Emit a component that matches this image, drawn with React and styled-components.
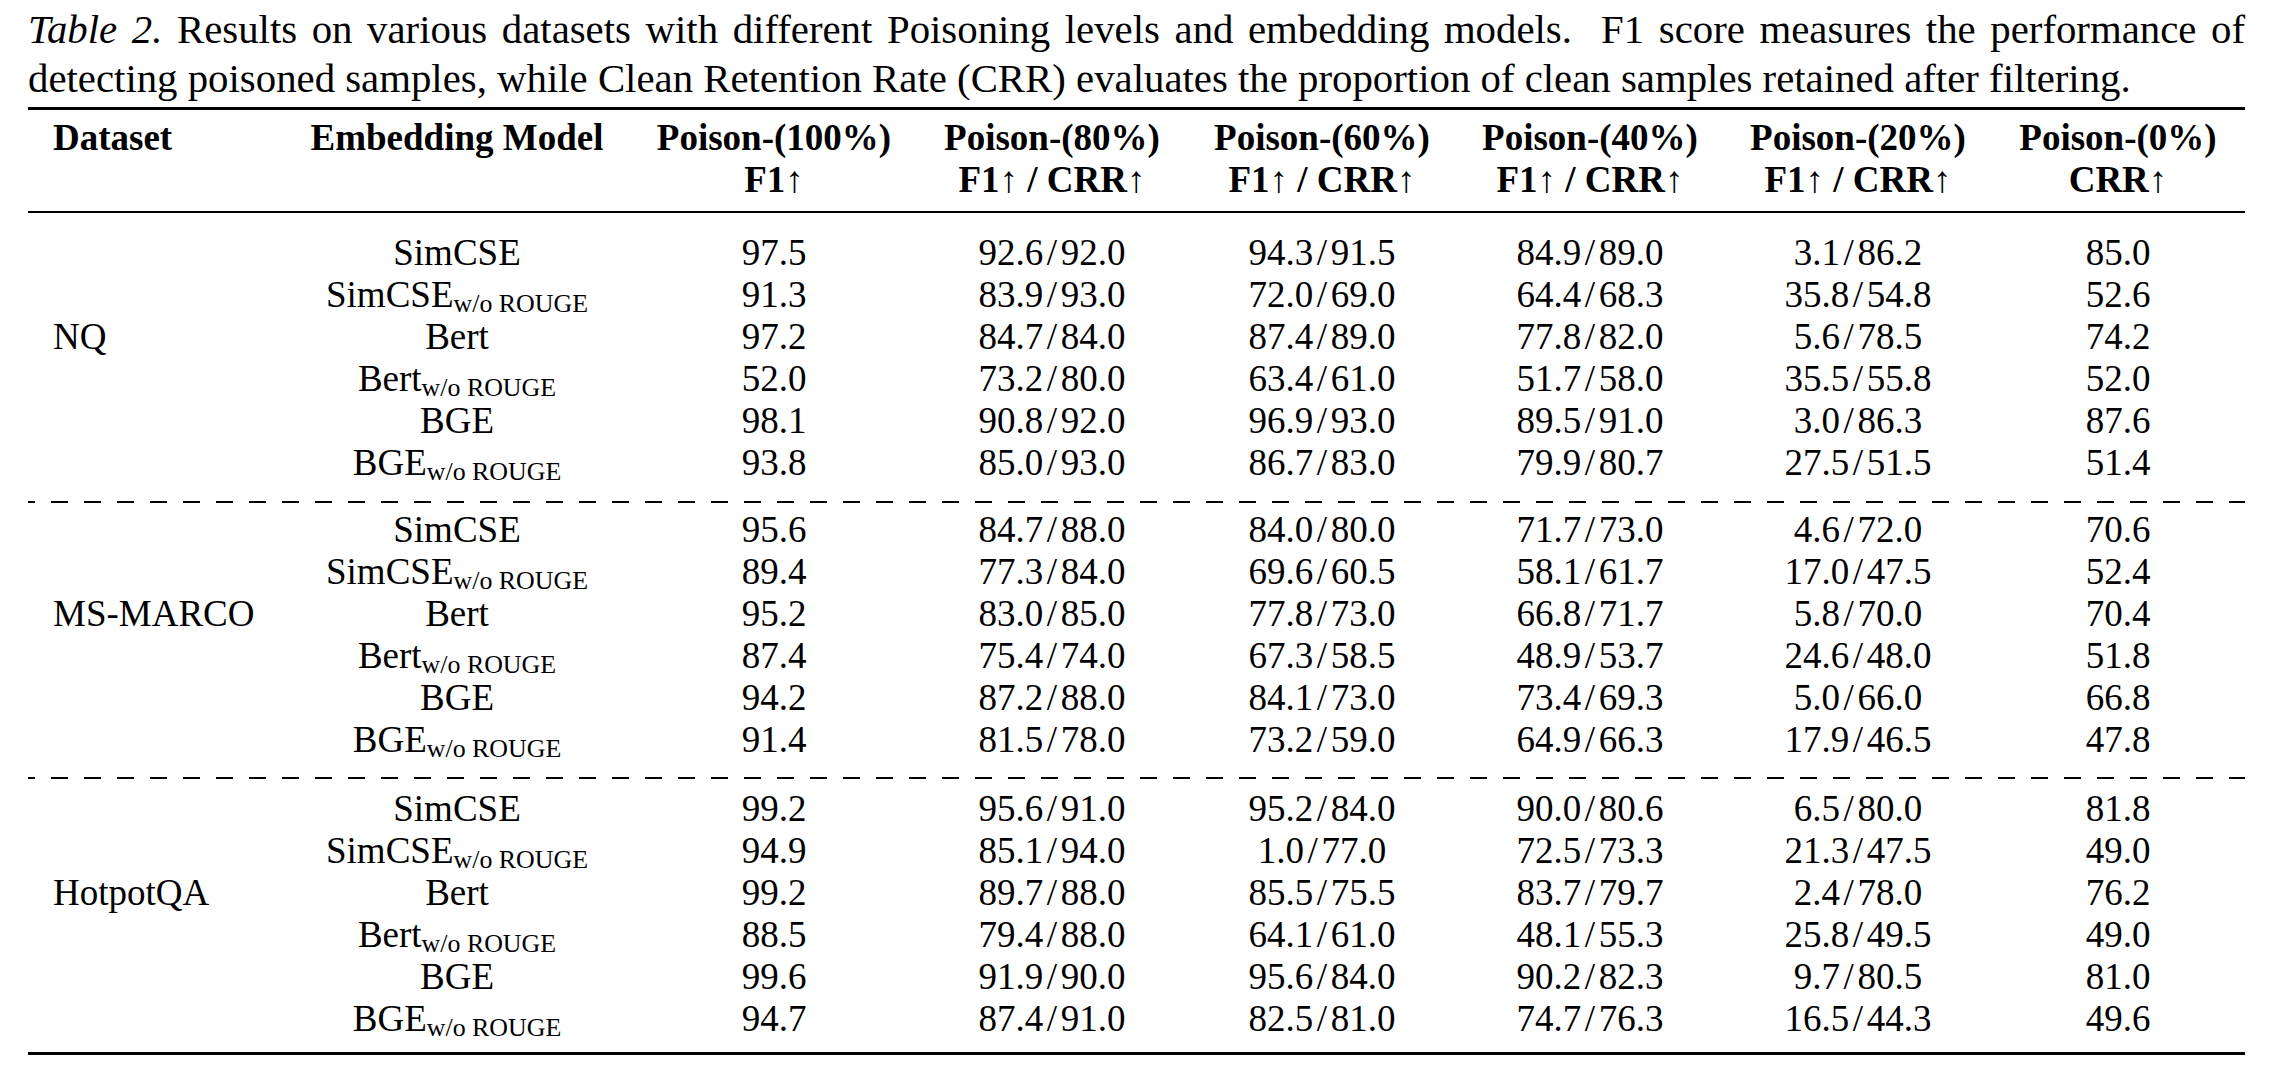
import React from 'react'
import styled, { createGlobalStyle } from 'styled-components'

const GlobalStyle = createGlobalStyle`
  html, body {
    margin: 0;
    padding: 0;
    background: #fff;
  }
  body {
    font-family: "Liberation Serif", "Times New Roman", serif;
    color: #000;
  }
`;

const COLS = '253px 352px 282px 274px 266px 270px 266px 254px';

const groups = [
  {
    name: 'NQ',
    rows: [
      ['SimCSE', false, '97.5', '92.6/92.0', '94.3/91.5', '84.9/89.0', '3.1/86.2', '85.0'],
      ['SimCSE', true, '91.3', '83.9/93.0', '72.0/69.0', '64.4/68.3', '35.8/54.8', '52.6'],
      ['Bert', false, '97.2', '84.7/84.0', '87.4/89.0', '77.8/82.0', '5.6/78.5', '74.2'],
      ['Bert', true, '52.0', '73.2/80.0', '63.4/61.0', '51.7/58.0', '35.5/55.8', '52.0'],
      ['BGE', false, '98.1', '90.8/92.0', '96.9/93.0', '89.5/91.0', '3.0/86.3', '87.6'],
      ['BGE', true, '93.8', '85.0/93.0', '86.7/83.0', '79.9/80.7', '27.5/51.5', '51.4'],
    ],
  },
  {
    name: 'MS-MARCO',
    rows: [
      ['SimCSE', false, '95.6', '84.7/88.0', '84.0/80.0', '71.7/73.0', '4.6/72.0', '70.6'],
      ['SimCSE', true, '89.4', '77.3/84.0', '69.6/60.5', '58.1/61.7', '17.0/47.5', '52.4'],
      ['Bert', false, '95.2', '83.0/85.0', '77.8/73.0', '66.8/71.7', '5.8/70.0', '70.4'],
      ['Bert', true, '87.4', '75.4/74.0', '67.3/58.5', '48.9/53.7', '24.6/48.0', '51.8'],
      ['BGE', false, '94.2', '87.2/88.0', '84.1/73.0', '73.4/69.3', '5.0/66.0', '66.8'],
      ['BGE', true, '91.4', '81.5/78.0', '73.2/59.0', '64.9/66.3', '17.9/46.5', '47.8'],
    ],
  },
  {
    name: 'HotpotQA',
    rows: [
      ['SimCSE', false, '99.2', '95.6/91.0', '95.2/84.0', '90.0/80.6', '6.5/80.0', '81.8'],
      ['SimCSE', true, '94.9', '85.1/94.0', '1.0/77.0', '72.5/73.3', '21.3/47.5', '49.0'],
      ['Bert', false, '99.2', '89.7/88.0', '85.5/75.5', '83.7/79.7', '2.4/78.0', '76.2'],
      ['Bert', true, '88.5', '79.4/88.0', '64.1/61.0', '48.1/55.3', '25.8/49.5', '49.0'],
      ['BGE', false, '99.6', '91.9/90.0', '95.6/84.0', '90.2/82.3', '9.7/80.5', '81.0'],
      ['BGE', true, '94.7', '87.4/91.0', '82.5/81.0', '74.7/76.3', '16.5/44.3', '49.6'],
    ],
  },
];

// padding above / below each block of six rows
const groupPad = [
  ['19px', '17px'],
  ['6px', '16px'],
  ['9px', '12px'],
];

const levels = ['100', '80', '60', '40', '20', '0'];

const App = () => {
  return (
    <>
      <GlobalStyle />
      <Page>
        <Caption>
          <CaptionLine justify>
            <em>Table 2.</em> Results on various datasets with different Poisoning levels and embedding models.&nbsp; F1 score measures the performance of
          </CaptionLine>
          <CaptionLine>
            detecting poisoned samples, while Clean Retention Rate (CRR) evaluates the proportion of clean samples retained after filtering.
          </CaptionLine>
        </Caption>

        <Rule thick />
        <Header>
          <HeadRow>
            <HeadCell left>Dataset</HeadCell>
            <HeadCell>Embedding Model</HeadCell>
            {levels.map(l => (
              <HeadCell key={l}>Poison-({l}%)</HeadCell>
            ))}
          </HeadRow>
          <HeadRow>
            <HeadCell left />
            <HeadCell />
            {levels.map((l, i) => (
              <HeadCell key={l}>
                {i < 5 && <>F1<Arrow>↑</Arrow></>}
                {i > 0 && i < 5 && ' / '}
                {i > 0 && <>CRR<Arrow>↑</Arrow></>}
              </HeadCell>
            ))}
          </HeadRow>
        </Header>
        <Rule />

        {groups.map((g, gi) => (
          <React.Fragment key={g.name}>
            <Group top={groupPad[gi][0]} bottom={groupPad[gi][1]}>
              {g.rows.map((r, ri) => (
                <Row key={ri}>
                  <Cell left>{ri === 2 ? g.name : ''}</Cell>
                  <Cell>
                    {r[0]}
                    {r[1] && <Sub>w/o ROUGE</Sub>}
                  </Cell>
                  {r.slice(2).map((v, vi) => {
                    const parts = v.split('/');
                    return (
                      <Cell key={vi}>
                        {parts[0]}
                        {parts.length > 1 && <Slash>/</Slash>}
                        {parts[1]}
                      </Cell>
                    );
                  })}
                </Row>
              ))}
            </Group>
            {gi < groups.length - 1 ? <Dashed /> : <Rule thick />}
          </React.Fragment>
        ))}
      </Page>
    </>
  )
}

const Page = styled.div`
  width: 2217px;
  padding: 5px 0 0 28px;
`;

const Caption = styled.div`
  font-size: 40.8px;
  line-height: 49px;
  margin-bottom: 4px;

  em {
    font-style: italic;
  }
`;

const CaptionLine = styled.div`
  text-align: ${props => (props.justify ? 'justify' : 'left')};
  text-align-last: ${props => (props.justify ? 'justify' : 'left')};
  white-space: ${props => (props.justify ? 'normal' : 'nowrap')};
`;

const Rule = styled.div`
  height: ${props => (props.thick ? '3px' : '2px')};
  background: #000;
`;

const Dashed = styled.div`
  height: 2px;
  background-image: linear-gradient(90deg, #000 17px, transparent 17px);
  background-size: 33px 2px;
  background-position: -10px 0;
`;

const Header = styled.div`
  padding: 7px 0 10px 0;
`;

const HeadRow = styled.div`
  display: grid;
  grid-template-columns: ${COLS};
  font-size: 37px;
  line-height: 42px;
  font-weight: 700;
`;

const HeadCell = styled.div`
  text-align: ${props => (props.left ? 'left' : 'center')};
  padding-left: ${props => (props.left ? '25px' : '0')};
  white-space: nowrap;
`;

const Arrow = styled.span`
  font-weight: 400;
`;

const Group = styled.div`
  padding-top: ${props => props.top};
  padding-bottom: ${props => props.bottom};
`;

const Row = styled.div`
  display: grid;
  grid-template-columns: ${COLS};
  font-size: 37px;
  line-height: 42px;
  height: 42px;
`;

const Cell = styled.div`
  text-align: ${props => (props.left ? 'left' : 'center')};
  padding-left: ${props => (props.left ? '25px' : '0')};
  white-space: nowrap;
`;

const Sub = styled.span`
  font-size: 0.7em;
  line-height: 0;
  vertical-align: -5px;
`;

const Slash = styled.span`
  margin: 0 0.1em;
`;

export default App;
